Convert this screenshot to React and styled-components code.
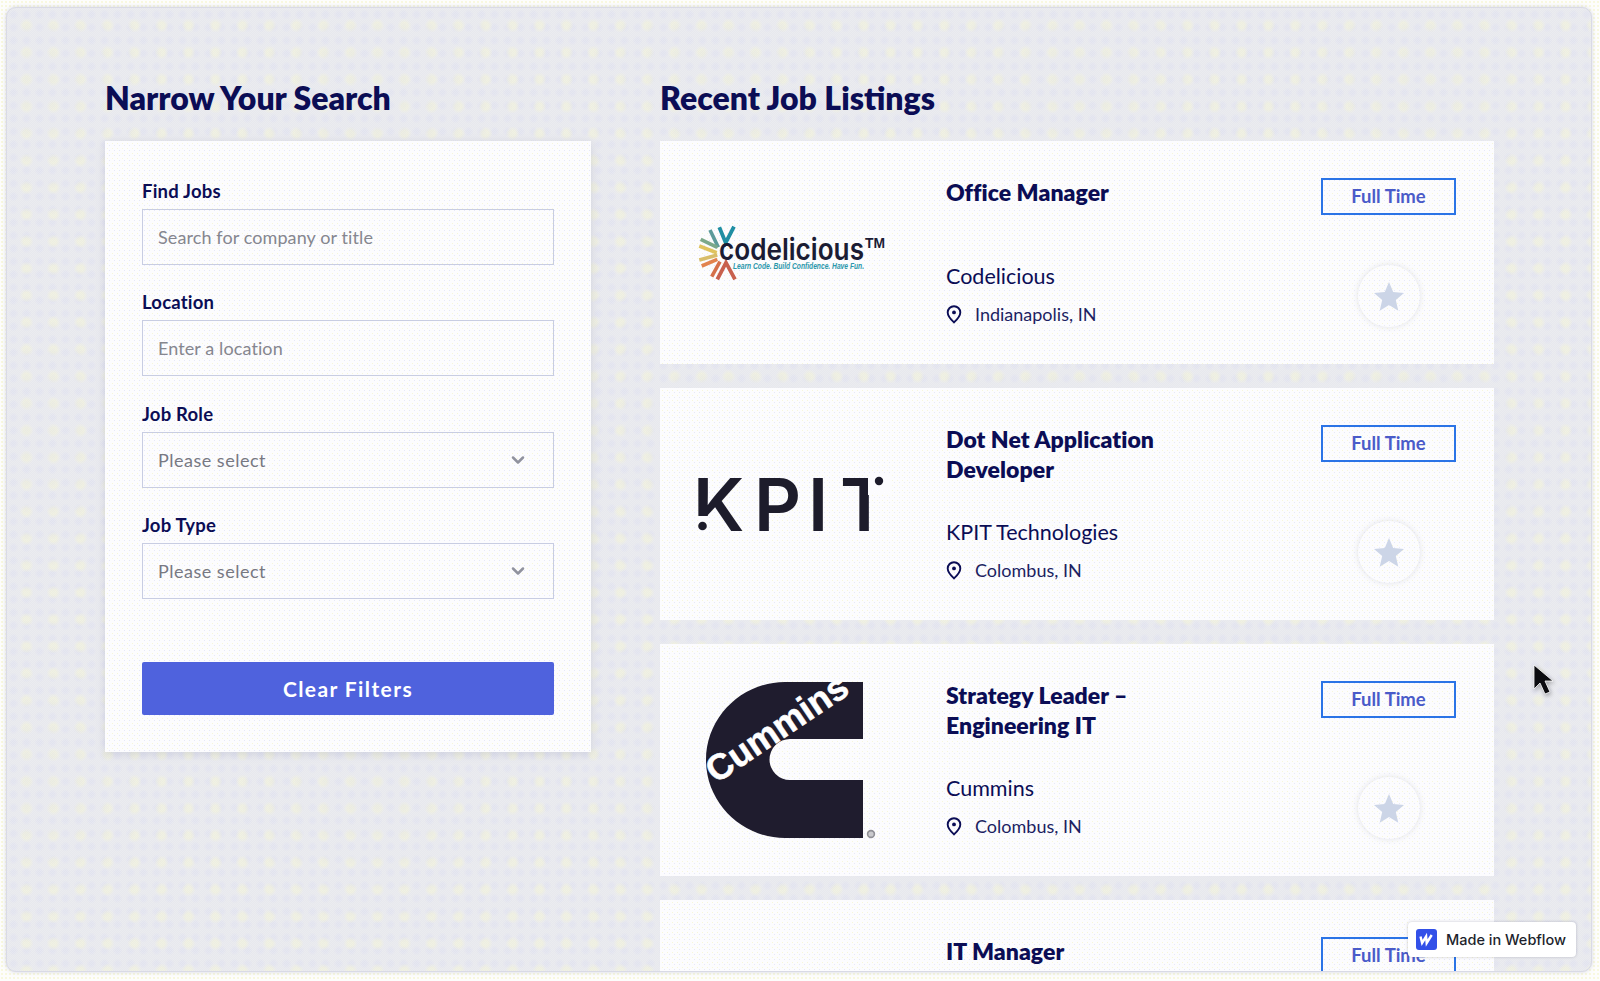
import React from 'react';
import styled, { createGlobalStyle } from 'styled-components';
import { ChevronDown } from 'lucide-react';

const NAVY = '#0b0d55';
const CARD_BG = '#fcfcfe';
const FONT = '"Lato", "Open Sans", Arial, sans-serif';

const GlobalStyle = createGlobalStyle`
  * { box-sizing: border-box; }
  html, body {
    margin: 0;
    height: 981px;
    overflow: hidden;
    font-family: ${FONT};
    color: ${NAVY};
    background-color: #fdfdfc;
    background-image: radial-gradient(#f6f6cf 0.6px, transparent 0.9px);
    background-size: 4px 4px;
  }
`;

const Page = styled.div`
  position: relative;
  width: 1600px;
  height: 981px;
  padding: 7px 8px 9px 6px;
`;

const Frame = styled.main`
  height: 965px;
  overflow: hidden;
  border: 1px solid #d9dae6;
  border-radius: 10px;
  box-shadow: 0 0 4px rgba(170, 172, 195, 0.45);
  padding: 70px 92px 0 98px;
  display: grid;
  grid-template-columns: 486px 834px;
  column-gap: 69px;
  align-items: start;
  background-color: #e7e8ed;
  background-image:
    repeating-conic-gradient(rgba(255, 255, 255, 0.16) 0 25%, transparent 0 50%),
    radial-gradient(circle, rgba(246, 246, 205, 0.42) 0 3px, transparent 7px),
    radial-gradient(circle, rgba(216, 218, 240, 0.35) 0 2px, transparent 5px);
  background-size: 2px 2px, 27px 27px, 13px 13px;
  background-position: 0 0, 6px 4px, 0 0;
`;

const Column = styled.section`
  display: flex;
  flex-direction: column;
`;

const Heading = styled.h2`
  margin: 0 0 23px;
  font-size: 32px;
  line-height: 40px;
  font-weight: 800;
  color: ${NAVY};
`;

const dotted = `
  background-color: ${CARD_BG};
  background-image:
    radial-gradient(#f7f7d8 0.6px, transparent 0.9px),
    radial-gradient(#e6e8f8 0.6px, transparent 0.9px);
  background-size: 5px 5px;
  background-position: 0 0, 2px 2px;
`;

const FilterCard = styled.form`
  ${dotted}
  padding: 37px;
  box-shadow: 0 2px 8px rgba(120, 124, 160, 0.22);
`;

const Label = styled.label`
  display: block;
  font-size: 18.5px;
  line-height: 26px;
  font-weight: 700;
  letter-spacing: 0.2px;
  margin-bottom: 5px;
`;

const Input = styled.input`
  display: block;
  width: 100%;
  height: 56px;
  margin-bottom: 24.4px;
  padding: 0 15px;
  border: 1px solid #c8cde2;
  background: transparent;
  font-family: ${FONT};
  font-size: 18px;
  letter-spacing: 0.1px;
  outline: none;
  &::placeholder { color: #85868f; opacity: 1; }
`;

const Select = styled.div`
  display: flex;
  align-items: center;
  justify-content: space-between;
  height: 56px;
  margin-bottom: 24.4px;
  padding: 0 25px 0 15px;
  border: 1px solid #c8cde2;
  font-size: 18px;
  letter-spacing: 0.5px;
  color: #777882;
  svg { color: #90929e; }
`;

const ClearButton = styled.button`
  display: block;
  width: 100%;
  height: 53px;
  margin-top: 63px;
  border: none;
  border-radius: 2px;
  background: #4f62dd;
  color: #fff;
  font-family: ${FONT};
  font-size: 21px;
  font-weight: 700;
  letter-spacing: 1.4px;
`;

const JobList = styled.div`
  display: flex;
  flex-direction: column;
  gap: 24px;
`;

const JobCard = styled.article`
  ${dotted}
  display: flex;
  flex-shrink: 0;
  padding: 37px 38px;
`;

const LogoBox = styled.div`
  width: 187px;
  margin-right: 61px;
  flex-shrink: 0;
  display: flex;
  align-items: center;
  svg { overflow: visible; }
`;

const JobInfo = styled.div`
  flex: 1;
  display: flex;
  flex-direction: column;
`;

const JobTitle = styled.h3`
  margin: -1px 0 35px;
  min-height: 51px;
  font-size: 23px;
  line-height: 30px;
  font-weight: 800;
  letter-spacing: 0.05px;
  color: ${NAVY};
  white-space: pre-line;
`;

const Company = styled.div`
  font-size: 21.5px;
  line-height: 26px;
  margin-bottom: 12px;
`;

const Place = styled.div`
  display: flex;
  align-items: center;
  gap: 13px;
  font-size: 18px;
  line-height: 26px;
  color: #1c1f62;
`;

const JobSide = styled.div`
  width: 135px;
  flex-shrink: 0;
  display: flex;
  flex-direction: column;
  align-items: center;
  justify-content: space-between;
`;

const TypeTag = styled.div`
  width: 135px;
  height: 37px;
  border: 2px solid #2b74e6;
  display: flex;
  align-items: center;
  justify-content: center;
  font-size: 18.5px;
  font-weight: 700;
  padding-bottom: 1px;
  color: #4a5bc9;
`;

const FavButton = styled.div`
  width: 62px;
  height: 62px;
  border-radius: 50%;
  display: flex;
  align-items: center;
  justify-content: center;
  box-shadow: 0 0 6px rgba(190, 192, 200, 0.4);
`;

const Badge = styled.a`
  position: absolute;
  left: 1408px;
  top: 922px;
  width: 168px;
  height: 35px;
  display: flex;
  align-items: center;
  gap: 9px;
  padding-left: 8px;
  background: #fff;
  border-radius: 4px;
  box-shadow: 0 0 3px rgba(30, 30, 60, 0.25);
  font-family: "Inter", sans-serif;
  font-size: 14.5px;
  font-weight: 500;
  color: #1d1f2c;
`;

const Cursor = styled.svg`
  position: absolute;
  left: 1533px;
  top: 664px;
  filter: drop-shadow(1px 2px 2px rgba(0, 0, 0, 0.3));
`;

function Star() {
  return (
    <svg width="30" height="29" viewBox="0 0 30 29">
      <polygon fill="#ccd5e7" points="15,0 19.2,10 30,11 21.8,18.1 24.3,28.8 15,23.1 5.7,28.8 8.2,18.1 0,11 10.8,10" />
    </svg>
  );
}

function Pin() {
  return (
    <svg width="16" height="19" viewBox="0 0 16 19">
      <path d="M8 1.2a6.3 6.3 0 0 1 6.3 6.3C14.3 11.6 8 17.4 8 17.4S1.7 11.6 1.7 7.5A6.3 6.3 0 0 1 8 1.2z" fill="none" stroke={NAVY} strokeWidth="1.9" />
      <circle cx="8" cy="7.4" r="1.9" fill={NAVY} />
    </svg>
  );
}

const RAYS = [
  [12, 5, 20.3, 22.3, '#5c9a9a'],
  [2.7, 14.3, 19.3, 22.3, '#7ba88a'],
  [1.3, 21, 18.7, 27.7, '#e0c35e'],
  [1.3, 35, 19.3, 30, '#d8bd6a'],
  [3.7, 41, 19.3, 34.3, '#e2834e'],
  [13.7, 51.7, 22, 36.7, '#d5704a'],
];

function CodeliciousLogo() {
  return (
    <svg width="187" height="56" viewBox="0 0 187 56">
      {RAYS.map(([x1, y1, x2, y2, color]) => (
        <line key={color} x1={x1} y1={y1} x2={x2} y2={y2} stroke={color} strokeWidth="3.6" />
      ))}
      <polyline points="21.3,2.3 27.7,17.7 36,1.7" fill="none" stroke="#1f8ea3" strokeWidth="3.8" />
      <polyline points="19.3,54.3 28,37.7 37,54.3" fill="none" stroke="#c8604e" strokeWidth="3.8" />
      <text x="21" y="35" fontFamily="Inter, sans-serif" fontWeight="600" fontSize="30" fill="#1b1c34" textLength="145" lengthAdjust="spacingAndGlyphs">codelicious</text>
      <text x="167" y="23" fontFamily="Liberation Sans, sans-serif" fontWeight="700" fontSize="14" fill="#1b1c34" textLength="20" lengthAdjust="spacingAndGlyphs">TM</text>
      <text x="35" y="44" fontFamily="Liberation Sans, sans-serif" fontStyle="italic" fontWeight="700" fontSize="8.2" fill="#2b97ab" textLength="131" lengthAdjust="spacingAndGlyphs">Learn Code. Build Confidence. Have Fun.</text>
    </svg>
  );
}

function KpitLogo() {
  return (
    <svg width="187" height="58" viewBox="0 0 187 58">
      <text y="56" x="-5 56 110 142" fontFamily="Inter, sans-serif" fontWeight="600" fontSize="73" fill="#1d1c2b">KPIT</text>
      <rect x="170" y="0" width="24" height="20" fill={CARD_BG} />
      <rect x="0" y="41" width="11" height="17" fill={CARD_BG} />
      <circle cx="181" cy="6" r="4.2" fill="#1d1c2b" />
      <circle cx="4.5" cy="51" r="4.3" fill="#1d1c2b" />
    </svg>
  );
}

function CumminsLogo() {
  return (
    <svg width="187" height="157" viewBox="0 3 187 157">
      <path
        fill="#1f1c2e"
        d="M165 3H87C44 3 8 38 8 81s36 78 79 78h78v-58H92a20.5 20.5 0 0 1 0-41h73z"
      />
      <text
        x="0"
        y="0"
        transform="translate(18 105) rotate(-34)"
        fontFamily="Liberation Sans, sans-serif"
        fontWeight="700"
        fontSize="36"
        fill="#fff"
        stroke="#fff"
        strokeWidth="0.6"
        textLength="163"
        lengthAdjust="spacingAndGlyphs"
      >Cummins</text>
      <circle cx="173" cy="155" r="3.4" fill="#c9c9cd" stroke="#8f8f96" strokeWidth="1.6" />
    </svg>
  );
}

const JOBS = [
  { title: 'Office Manager', company: 'Codelicious', place: 'Indianapolis, IN', Logo: CodeliciousLogo },
  { title: 'Dot Net Application\nDeveloper', company: 'KPIT Technologies', place: 'Colombus, IN', Logo: KpitLogo },
  { title: 'Strategy Leader –\nEngineering IT', company: 'Cummins', place: 'Colombus, IN', Logo: CumminsLogo },
  { title: 'IT Manager', company: 'Cummins', place: 'Colombus, IN', Logo: null },
];

export default function App() {
  return (
    <Page>
      <GlobalStyle />
      <Frame>
        <Column>
          <Heading>Narrow Your Search</Heading>
          <FilterCard>
            <Label>Find Jobs</Label>
            <Input placeholder="Search for company or title" />
            <Label>Location</Label>
            <Input placeholder="Enter a location" />
            <Label>Job Role</Label>
            <Select>Please select<ChevronDown size={20} strokeWidth={3} /></Select>
            <Label>Job Type</Label>
            <Select>Please select<ChevronDown size={20} strokeWidth={3} /></Select>
            <ClearButton type="button">Clear Filters</ClearButton>
          </FilterCard>
        </Column>
        <Column>
          <Heading>Recent Job Listings</Heading>
          <JobList>
            {JOBS.map(({ title, company, place, Logo }) => (
              <JobCard key={title}>
                <LogoBox>{Logo && <Logo />}</LogoBox>
                <JobInfo>
                  <JobTitle>{title}</JobTitle>
                  <Company>{company}</Company>
                  <Place><Pin />{place}</Place>
                </JobInfo>
                <JobSide>
                  <TypeTag>Full Time</TypeTag>
                  <FavButton><Star /></FavButton>
                </JobSide>
              </JobCard>
            ))}
          </JobList>
        </Column>
      </Frame>
      <Badge>
        <svg width="21" height="21" viewBox="0 0 21 21">
          <rect width="21" height="21" rx="3" fill="#3250e8" />
          <path d="M4.5 7.5l1.6 6.5 4-6.5 .6 6.5 5-8" fill="none" stroke="#fff" strokeWidth="2.4" />
        </svg>
        Made in Webflow
      </Badge>
      <Cursor width="20" height="32" viewBox="0 0 20 32">
        <path d="M1 1v24l6-6 5 11 5-2-5-11h8z" fill="#0c0c10" stroke="#fff" strokeWidth="0.8" />
      </Cursor>
    </Page>
  );
}
